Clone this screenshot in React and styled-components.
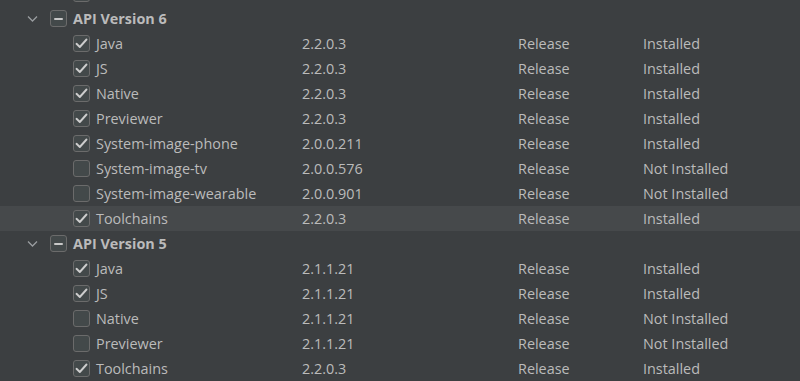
import React from "react";
import styled, { createGlobalStyle } from "styled-components";

const Global = createGlobalStyle`
  html, body { margin: 0; padding: 0; background: #3c3f41; overflow: hidden; }
  body { font-family: "Open Sans", "Noto Sans", sans-serif; }
`;

const Viewport = styled.div`
  width: 800px;
  height: 381px;
  overflow: hidden;
  background: #3c3f41;
`;

const List = styled.div`
  display: flex;
  flex-direction: column;
  margin-top: -19px;
`;

const Row = styled.div`
  display: grid;
  grid-template-columns: 302px 216px 125px 1fr;
  align-items: center;
  height: 25px;
  background: ${(p) => (p.$selected ? "#46494b" : "transparent")};
  color: #bbbbbb;
  font-size: 14.4px;
`;

const NameCell = styled.div`
  display: flex;
  align-items: center;
  padding-left: ${(p) => (p.$group ? 27 : 73)}px;
  font-weight: ${(p) => (p.$group ? 700 : 400)};
  white-space: nowrap;
`;

const Cell = styled.div`
  white-space: nowrap;
`;

const Chevron = styled.svg`
  width: 11px;
  height: 8px;
  margin-right: 12px;
  flex: none;
`;

const Box = styled.div`
  width: 15px;
  height: 15px;
  border: 1px solid #6b6b6b;
  border-radius: 3px;
  background: #43494a;
  box-sizing: content-box;
  display: flex;
  align-items: center;
  justify-content: center;
  margin-right: 6px;
  flex: none;
`;

const Check = () => (
  <svg width="13" height="11" viewBox="0 0 13 11">
    <path d="M1.5 5.8 L4.8 9 L11.5 1.5" fill="none" stroke="#cdcdcd" strokeWidth="1.9" strokeLinecap="round" strokeLinejoin="round" />
  </svg>
);

const Dash = styled.div`
  width: 9px;
  height: 2px;
  background: #c8c8c8;
  border-radius: 1px;
`;

const groups = [
  {
    title: "API Version 6",
    items: [
      ["Java", "2.2.0.3", true],
      ["JS", "2.2.0.3", true],
      ["Native", "2.2.0.3", true],
      ["Previewer", "2.2.0.3", true],
      ["System-image-phone", "2.0.0.211", true],
      ["System-image-tv", "2.0.0.576", false],
      ["System-image-wearable", "2.0.0.901", false],
      ["Toolchains", "2.2.0.3", true, true],
    ],
  },
  {
    title: "API Version 5",
    items: [
      ["Java", "2.1.1.21", true],
      ["JS", "2.1.1.21", true],
      ["Native", "2.1.1.21", false],
      ["Previewer", "2.1.1.21", false],
      ["Toolchains", "2.2.0.3", true],
    ],
  },
];

const ItemRow = ({ name, version, checked, selected, status = true }) => (
  <Row $selected={selected}>
    <NameCell>
      <Box>{checked && <Check />}</Box>
      {name}
    </NameCell>
    <Cell>{version}</Cell>
    <Cell>{status ? "Release" : ""}</Cell>
    <Cell>{status ? (checked ? "Installed" : "Not Installed") : ""}</Cell>
  </Row>
);

export default function App() {
  return (
    <Viewport>
      <Global />
      <List>
        <ItemRow name="" version="" checked={false} status={false} />
        {groups.map((g) => (
          <React.Fragment key={g.title}>
            <Row>
              <NameCell $group>
                <Chevron viewBox="0 0 11 8">
                  <path d="M1 1.5 L5.5 6 L10 1.5" fill="none" stroke="#9a9da0" strokeWidth="1.3" />
                </Chevron>
                <Box><Dash /></Box>
                {g.title}
              </NameCell>
              <Cell />
              <Cell />
              <Cell />
            </Row>
            {g.items.map(([n, v, c, s]) => (
              <ItemRow key={g.title + n} name={n} version={v} checked={c} selected={s} />
            ))}
          </React.Fragment>
        ))}
      </List>
    </Viewport>
  );
}
